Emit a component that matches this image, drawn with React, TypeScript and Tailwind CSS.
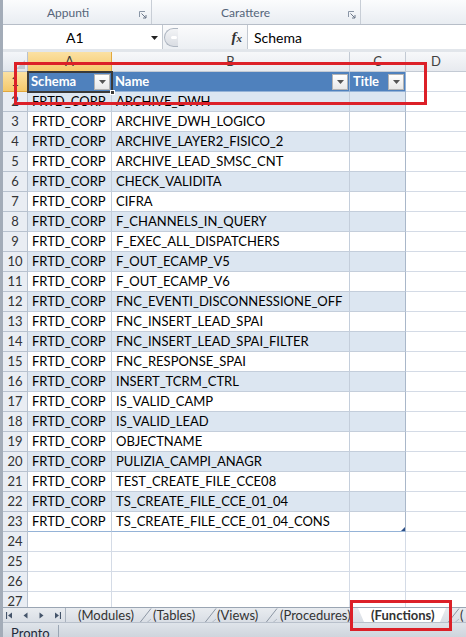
import React from "react";

const names = [
  "ARCHIVE_DWH",
  "ARCHIVE_DWH_LOGICO",
  "ARCHIVE_LAYER2_FISICO_2",
  "ARCHIVE_LEAD_SMSC_CNT",
  "CHECK_VALIDITA",
  "CIFRA",
  "F_CHANNELS_IN_QUERY",
  "F_EXEC_ALL_DISPATCHERS",
  "F_OUT_ECAMP_V5",
  "F_OUT_ECAMP_V6",
  "FNC_EVENTI_DISCONNESSIONE_OFF",
  "FNC_INSERT_LEAD_SPAI",
  "FNC_INSERT_LEAD_SPAI_FILTER",
  "FNC_RESPONSE_SPAI",
  "INSERT_TCRM_CTRL",
  "IS_VALID_CAMP",
  "IS_VALID_LEAD",
  "OBJECTNAME",
  "PULIZIA_CAMPI_ANAGR",
  "TEST_CREATE_FILE_CCE08",
  "TS_CREATE_FILE_CCE_01_04",
  "TS_CREATE_FILE_CCE_01_04_CONS",
];

function Launcher() {
  return (
    <svg width="8" height="8" viewBox="0 0 8 8" className="block">
      <path d="M0.5 6V0.5H6" fill="none" stroke="#8a96a6" strokeWidth="1" />
      <path d="M2.5 2.5L7 7M7 4v3H4" fill="none" stroke="#6b7788" strokeWidth="1" />
    </svg>
  );
}

function FilterBtn() {
  return (
    <div className="w-[16px] h-[16px] shrink-0 border border-[#b4b4b4] bg-gradient-to-b from-white to-[#e8e8e8] flex items-center justify-center">
      <svg width="7" height="4" viewBox="0 0 7 4" className="block">
        <path d="M0 0H7L3.5 4Z" fill="#555" />
      </svg>
    </div>
  );
}

function RowHdr({ n, active }: { n: number; active?: boolean }) {
  return (
    <div
      className={
        active
          ? "w-[25px] shrink-0 flex items-center justify-center border-r border-b border-[#e2a83d] bg-gradient-to-b from-[#fbe1a3] to-[#f5c96a] text-[#3b3b3b]"
          : "w-[25px] shrink-0 flex items-center justify-center border-r border-b border-[#b8c2cf] bg-[#e9edf3] text-[#333]"
      }
    >
      {n}
    </div>
  );
}

function TabSlant() {
  return (
    <svg width="14" height="15" viewBox="0 0 14 15" className="block shrink-0">
      <path d="M13 0.5L2 14.5" stroke="#8d97a4" strokeWidth="1" fill="none" />
      <path d="M9 14.5L13 11" stroke="#b3bac4" strokeWidth="1" fill="none" />
    </svg>
  );
}

export default function App() {
  return (
    <div className="relative w-[466px] h-[637px] overflow-hidden flex bg-white font-[Lato,sans-serif] text-[13px] text-black">
      {/* window frame edge */}
      <div className="w-[3px] shrink-0 bg-[#a3acb8]" />
      <div className="flex-1 min-w-0 flex flex-col">
        {/* ribbon group labels */}
        <div className="h-[25px] shrink-0 flex border-b border-[#b7bec8] bg-gradient-to-b from-[#fbfcfd] to-[#e9edf2] text-[12px] text-[#55657a]">
          <div className="w-[149px] shrink-0 flex items-end pb-[2px] border-r border-[#c8ced6]">
            <span className="ml-[44px]">Appunti</span>
            <span className="ml-auto mr-[4px] mb-[3px]">
              <Launcher />
            </span>
          </div>
          <div className="w-[209px] shrink-0 flex items-end pb-[2px] border-r border-[#c8ced6]">
            <span className="ml-[69px]">Carattere</span>
            <span className="ml-auto mr-[4px] mb-[3px]">
              <Launcher />
            </span>
          </div>
          <div className="flex-1" />
        </div>

        {/* formula bar */}
        <div className="h-[27px] shrink-0 flex pb-[3px] bg-[#e2e6eb] text-[14px]">
          <div className="w-[160px] shrink-0 bg-white border-r border-[#c3c9d1] flex items-center relative">
            <span className="absolute left-[63px]">A1</span>
            <svg width="7" height="4" viewBox="0 0 7 4" className="absolute left-[148px] top-[11px]">
              <path d="M0 0H7L3.5 4Z" fill="#222" />
            </svg>
          </div>
          <div className="w-[84px] shrink-0 flex items-center bg-gradient-to-b from-[#fbfbfc] to-[#eceff3]">
            <div className="ml-[1px] w-[14px] h-[19px] rounded-l-full border border-r-0 border-[#aeb6c1] bg-gradient-to-b from-[#f3f4f6] to-[#d9dde3] flex items-center justify-center">
              <div className="w-[6px] h-[3px] rounded-full bg-white ml-[4px]" />
            </div>
            <span className="ml-auto mr-[5px] font-['Liberation_Serif',serif] italic font-bold text-[15px] text-[#333] leading-none">
              f<span className="text-[11px]">x</span>
            </span>
          </div>
          <div className="flex-1 bg-white border-l border-[#c3c9d1] flex items-center pl-[6px]">Schema</div>
        </div>

        {/* sheet grid */}
        <div className="flex-1 min-h-0 overflow-hidden flex flex-col">
          {/* column headers */}
          <div className="h-[20px] shrink-0 flex text-[#404040]">
            <div className="w-[25px] shrink-0 border-r border-b border-[#b8c2cf] bg-gradient-to-b from-[#f4f6f9] to-[#e1e6ed] relative">
              <svg width="9" height="9" viewBox="0 0 9 9" className="absolute right-[2px] bottom-[2px]">
                <path d="M9 0V9H0Z" fill="#c1c8d2" />
              </svg>
            </div>
            <div className="w-[84px] shrink-0 flex items-center justify-center border-r border-b border-[#e2a83d] bg-gradient-to-b from-[#fbe1a3] to-[#f5c96a] text-[#3b3b3b]">
              A
            </div>
            <div className="w-[238px] shrink-0 flex items-center justify-center border-r border-b border-[#c3cad4] bg-gradient-to-b from-[#f7f8fa] to-[#e7eaef]">
              B
            </div>
            <div className="w-[56px] shrink-0 flex items-center justify-center border-r border-b border-[#c3cad4] bg-gradient-to-b from-[#f7f8fa] to-[#e7eaef]">
              C
            </div>
            <div className="flex-1 flex items-center justify-center border-b border-[#c3cad4] bg-gradient-to-b from-[#f7f8fa] to-[#e7eaef]">
              D
            </div>
          </div>

          {/* table header row */}
          <div className="h-[20px] shrink-0 flex">
            <RowHdr n={1} active />
            <div className="w-[84px] shrink-0 relative flex items-center bg-[#4f81bd] border-r border-b border-[#95b3d7] pl-[3px] pr-[1px] font-bold text-white">
              <span>Schema</span>
              <span className="ml-auto">
                <FilterBtn />
              </span>
              {/* active cell outline */}
              <div className="absolute left-[-1px] top-[-1px] right-[-2px] bottom-[-2px] border-2 border-[#3a3a3a]" />
              <div className="absolute right-[-4px] bottom-[-4px] w-[5px] h-[5px] bg-[#3a3a3a] border border-white" />
            </div>
            <div className="w-[238px] shrink-0 flex items-center bg-[#4f81bd] border-r border-b border-[#95b3d7] pl-[3px] pr-[1px] font-bold text-white">
              <span>Name</span>
              <span className="ml-auto">
                <FilterBtn />
              </span>
            </div>
            <div className="w-[56px] shrink-0 flex items-center bg-[#4f81bd] border-r border-b border-[#95b3d7] pl-[3px] pr-[1px] font-bold text-white">
              <span>Title</span>
              <span className="ml-auto">
                <FilterBtn />
              </span>
            </div>
            <div className="flex-1 border-b border-[#d4dbe6]" />
          </div>

          {/* table body */}
          {names.map((name, i) => {
            const r = i + 2;
            const band = r % 2 === 0 ? "bg-[#dce6f1]" : "bg-white";
            const bottom = r === 23 ? "border-b-[#95b3d7]" : "border-b-[#c4cedb]";
            return (
              <div key={r} className="h-[20px] shrink-0 flex">
                <RowHdr n={r} />
                <div className={`w-[84px] shrink-0 flex items-center pl-[4px] whitespace-nowrap overflow-hidden border-r border-b border-r-[#c4cedb] ${bottom} ${band}`}>
                  FRTD_CORP
                </div>
                <div className={`w-[238px] shrink-0 flex items-center pl-[4px] whitespace-nowrap overflow-hidden border-r border-b border-r-[#c4cedb] ${bottom} ${band}`}>
                  {name}
                </div>
                <div className={`w-[56px] shrink-0 relative border-r border-b border-r-[#a9b7c9] ${bottom} ${band}`}>
                  {r === 23 && (
                    <svg width="4" height="4" viewBox="0 0 4 4" className="absolute right-0 bottom-0">
                      <path d="M4 0V4H0Z" fill="#2d4f86" />
                    </svg>
                  )}
                </div>
                <div className="flex-1 border-b border-[#d4dbe6]" />
              </div>
            );
          })}

          {/* empty rows below the table */}
          {[24, 25, 26, 27].map((r) => (
            <div key={r} className="h-[20px] shrink-0 flex">
              <RowHdr n={r} />
              <div className="w-[84px] shrink-0 border-r border-b border-[#d4dbe6]" />
              <div className="w-[238px] shrink-0 border-r border-b border-[#d4dbe6]" />
              <div className="w-[56px] shrink-0 border-r border-b border-[#d4dbe6]" />
              <div className="flex-1 border-b border-[#d4dbe6]" />
            </div>
          ))}
        </div>

        {/* sheet tabs */}
        <div className="h-[15px] shrink-0 flex items-stretch border-t border-[#9aa5b3] bg-gradient-to-b from-[#e9ecf0] to-[#d9dee5] text-[13px] leading-none text-[#333] whitespace-nowrap">
          <div className="w-[63px] shrink-0 flex items-center gap-[9px] pl-[3px] border-r border-[#aab3bf]">
            <svg width="7" height="7" viewBox="0 0 7 7">
              <path d="M0.5 0V7" stroke="#44546a" strokeWidth="1.2" />
              <path d="M6 0.5V6.5L2 3.5Z" fill="#44546a" />
            </svg>
            <svg width="7" height="7" viewBox="0 0 7 7">
              <path d="M5.5 0.5V6.5L1.5 3.5Z" fill="#44546a" />
            </svg>
            <svg width="7" height="7" viewBox="0 0 7 7">
              <path d="M1.5 0.5V6.5L5.5 3.5Z" fill="#44546a" />
            </svg>
            <svg width="7" height="7" viewBox="0 0 7 7">
              <path d="M1 0.5V6.5L5 3.5Z" fill="#44546a" />
              <path d="M6.5 0V7" stroke="#44546a" strokeWidth="1.2" />
            </svg>
          </div>
          <div className="w-[72px] shrink-0 flex items-center pl-[12px]">(Modules)</div>
          <TabSlant />
          <div className="w-[51px] shrink-0 flex items-center pl-[1px]">(Tables)</div>
          <TabSlant />
          <div className="w-[47px] shrink-0 flex items-center">(Views)</div>
          <TabSlant />
          <div className="w-[80px] shrink-0 flex items-center pl-[2px]">(Procedures)</div>
          <div className="w-[88px] shrink-0 flex items-center bg-white pl-[13px] font-bold [clip-path:polygon(0_0,100%_0,calc(100%-6px)_100%,6px_100%)]">
            (Functions)
          </div>
          <TabSlant />
          <div className="flex items-center">(</div>
        </div>

        {/* status bar */}
        <div className="h-[15px] shrink-0 flex items-start border-t border-[#b8c0cb] bg-gradient-to-b from-[#dfe4ea] to-[#cfd5dd] text-[13px] text-[#1e2a3a]">
          <span className="pl-[8px] pt-[4px] leading-none">Pronto</span>
          <div className="ml-[8px] mt-[2px] w-[1px] h-[14px] bg-[#9aa5b3]" />
        </div>
      </div>

      {/* annotation boxes */}
      <div className="absolute left-[14px] top-[62px] w-[413px] h-[43px] border-[3px] border-[#dc2028] pointer-events-none" />
      <div className="absolute left-[350px] top-[600px] w-[102px] h-[31px] border-[3px] border-[#dc2028] pointer-events-none" />
    </div>
  );
}
